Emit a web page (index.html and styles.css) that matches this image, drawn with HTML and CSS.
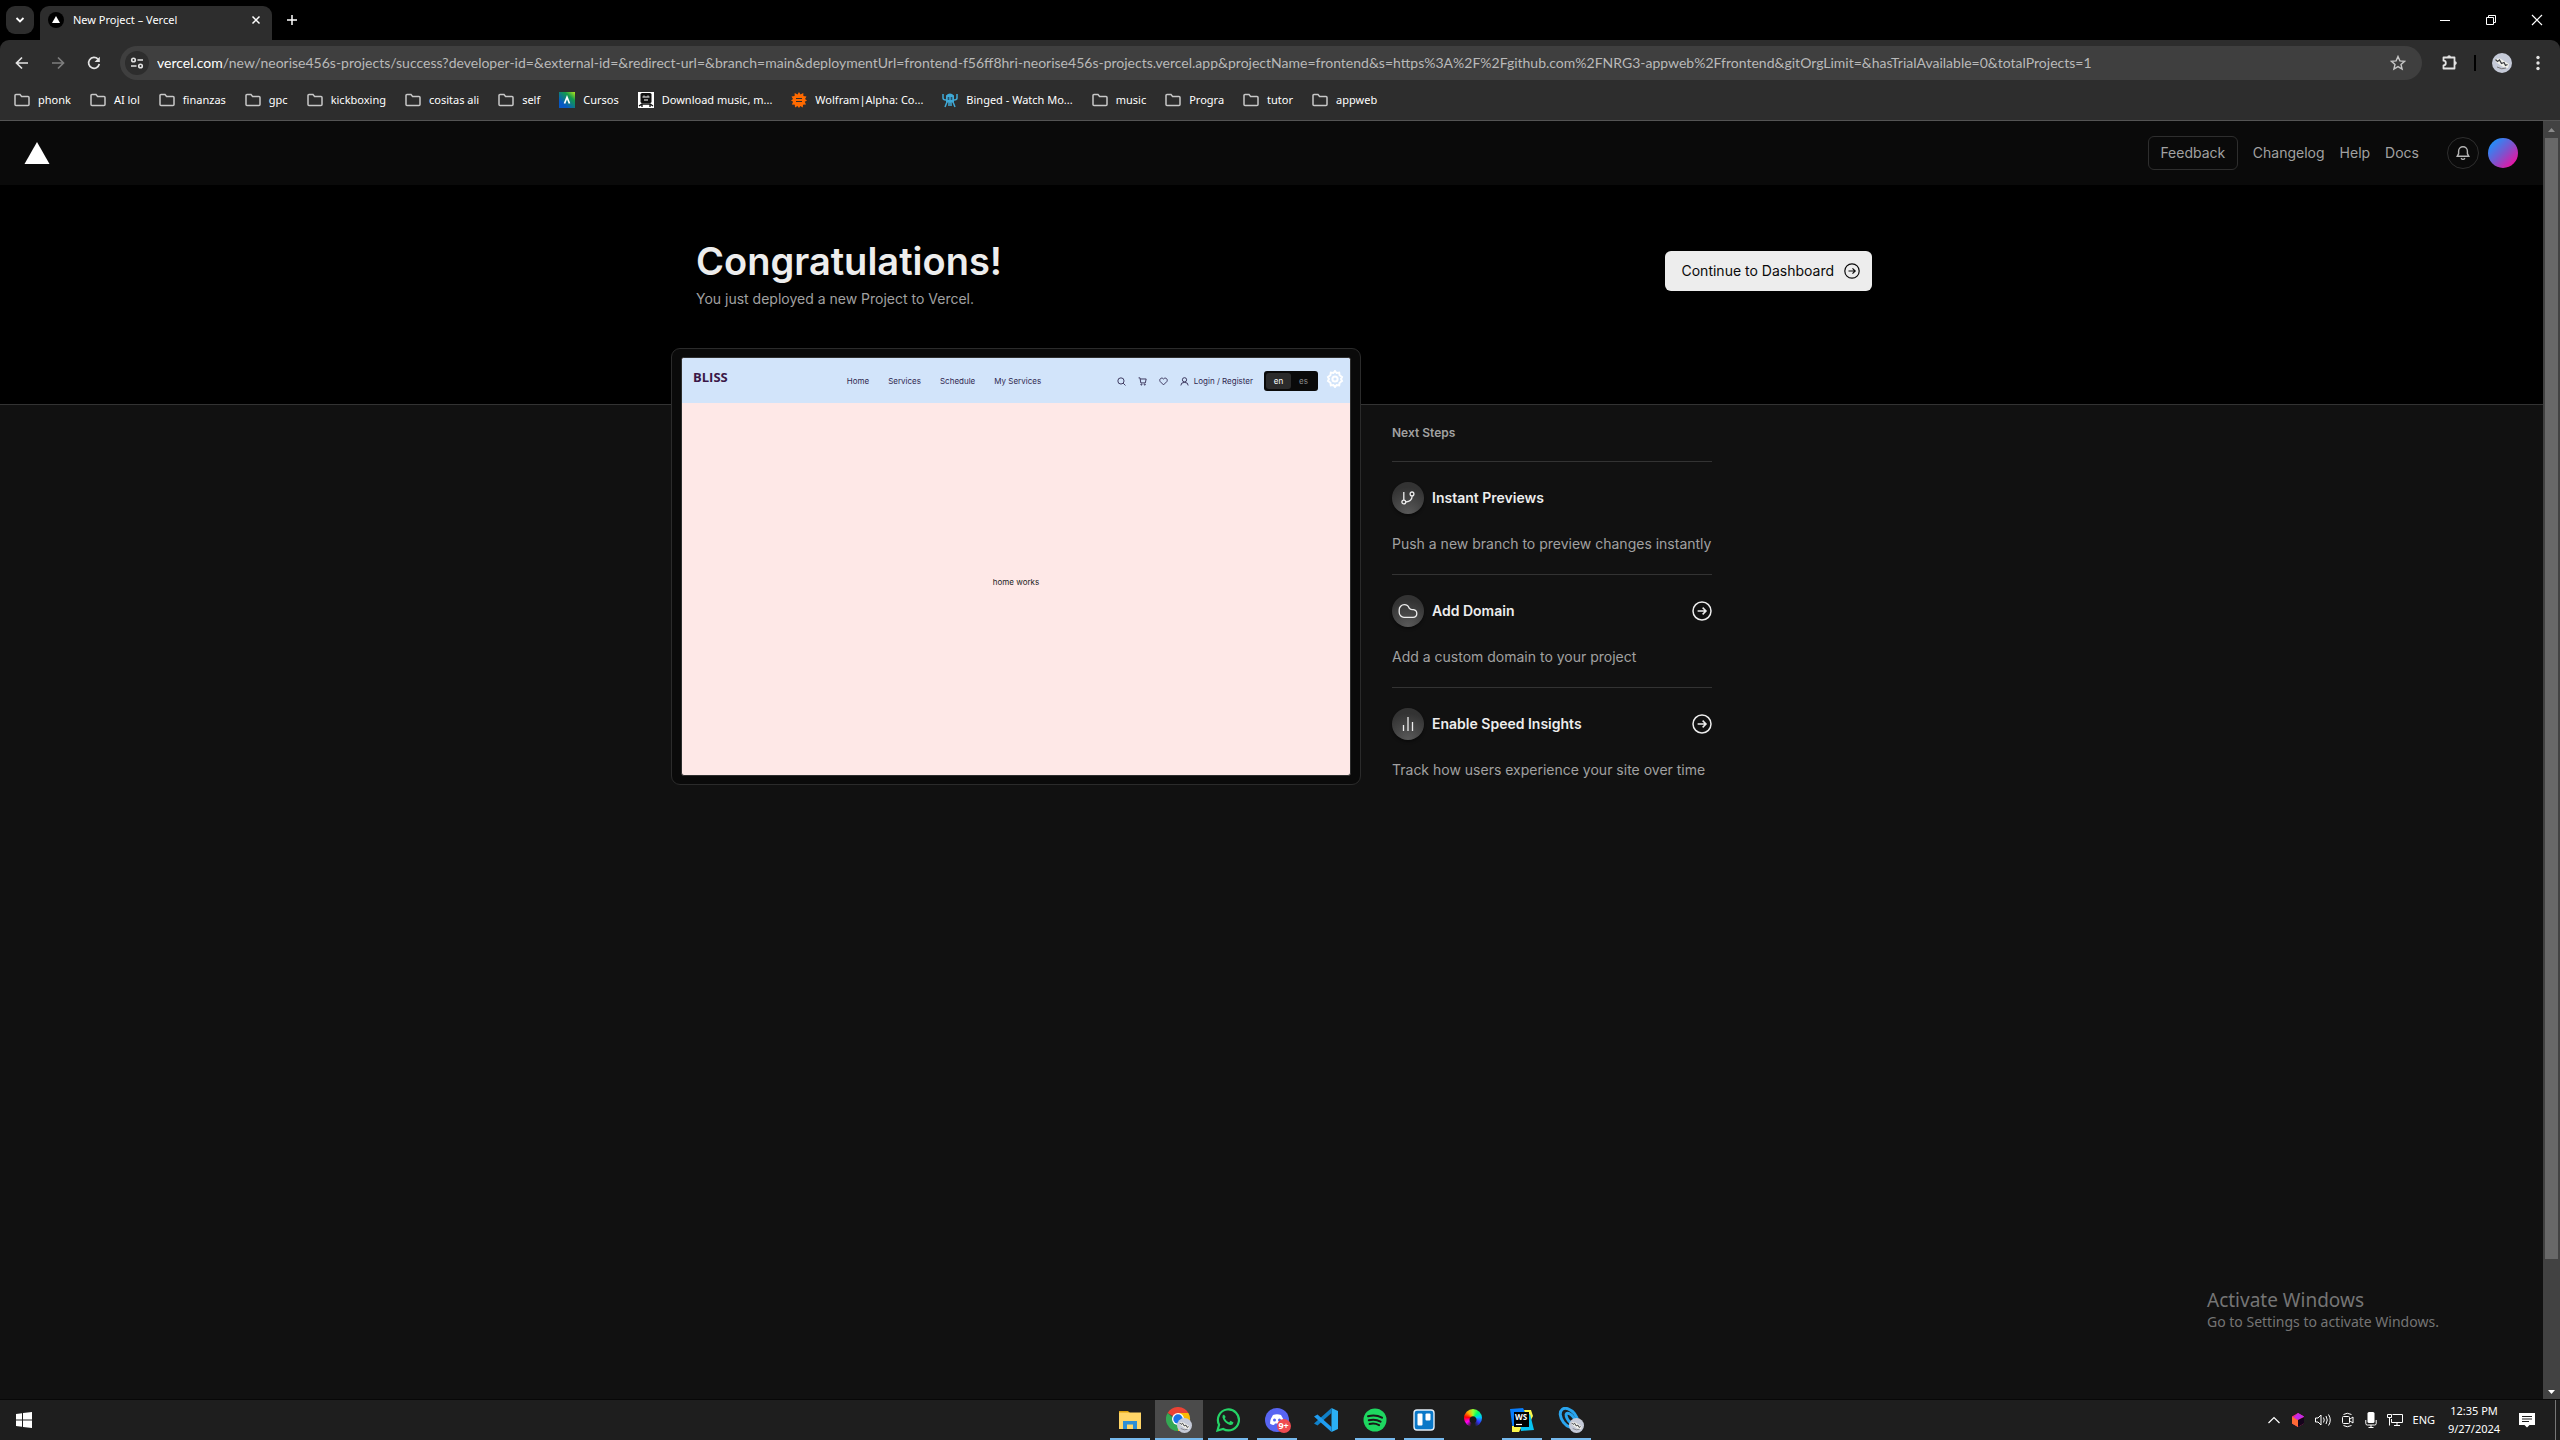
FILE: index.html
```html
<!DOCTYPE html>
<html lang="en">
<head>
<meta charset="utf-8">
<meta name="viewport" content="width=device-width, initial-scale=1">
<title>New Project – Vercel</title>
<link rel="stylesheet" href="styles.css">
</head>
<body>
<svg width="0" height="0" class="defs" aria-hidden="true">
  <defs>
    <symbol id="folder" viewBox="0 0 16 16"><path d="M1 3.500a1 1 0 0 1 1-1h4l1.600 2H14a1 1 0 0 1 1 1V12.500a1 1 0 0 1-1 1H2a1 1 0 0 1-1-1z" fill="none" stroke="#c7c7c7" stroke-width="1.500"/></symbol>
    <symbol id="arrow-circle" viewBox="0 0 16 16"><circle cx="8" cy="8" r="7.200" fill="none" stroke="currentColor" stroke-width="1.200"/><path d="M4.500 8H11M8.500 5.300L11.200 8l-2.700 2.700" fill="none" stroke="currentColor" stroke-width="1.200"/></symbol>
    <symbol id="pilot" viewBox="0 0 20 20"><circle cx="10" cy="10" r="10" fill="#c5cad8"/><path d="M3 6l5-.5 9 5.500-1 4-5-1-7-5z" fill="#f2f2ec"/><path d="M3.500 6.500l2 2 2-1.500 2 3.500 2.500-1 1.500 3 2-1" fill="none" stroke="#3b3d42" stroke-width="1.300"/><path d="M5 14q5 3 9 1" fill="none" stroke="#777" stroke-width="1"/></symbol>
  </defs>
</svg>

<header class="browser">
  <div class="tabstrip">
    <button class="tab-search" aria-label="Search tabs"><svg width="10" height="10" viewBox="0 0 10 10"><path d="M1.500 3l3.500 3.500L8.500 3" fill="none" stroke="#fff" stroke-width="1.800"/></svg></button>
    <div class="tab">
      <svg width="16" height="16" viewBox="0 0 16 16"><circle cx="8" cy="8" r="8" fill="#000"/><path d="M8 4l4 7H4z" fill="#fff"/></svg>
      <span class="tab-title">New Project – Vercel</span>
      <button class="icon-button tab-close" aria-label="Close tab"><svg width="10" height="10" viewBox="0 0 10 10"><path d="M1.500 1.500l7 7m0-7l-7 7" stroke="#fff" stroke-width="1.500"/></svg></button>
    </div>
    <button class="icon-button new-tab" aria-label="New tab"><svg width="12" height="12" viewBox="0 0 12 12"><path d="M6 1v10M1 6h10" stroke="#fff" stroke-width="1.500"/></svg></button>
    <div class="window-controls">
      <button class="icon-button" aria-label="Minimize"><svg width="12" height="12" viewBox="0 0 12 12"><path d="M1 6.500h10" stroke="#fff"/></svg></button>
      <button class="icon-button" aria-label="Restore"><svg width="12" height="12" viewBox="0 0 12 12"><path d="M1.500 3.500h7v7h-7zM3.500 3.500v-2h7v7h-2" fill="none" stroke="#fff"/></svg></button>
      <button class="icon-button" aria-label="Close"><svg width="12" height="12" viewBox="0 0 12 12"><path d="M1 1l10 10M11 1L1 11" stroke="#fff" stroke-width="1.200"/></svg></button>
    </div>
  </div>
  <div class="toolbar">
    <button class="icon-button nav-button" aria-label="Back"><svg width="14" height="14" viewBox="0 0 14 14"><path d="M13 7H2M7 1.500L1.500 7 7 12.500" fill="none" stroke="#e3e3e3" stroke-width="1.700"/></svg></button>
    <button class="icon-button nav-button" aria-label="Forward"><svg width="14" height="14" viewBox="0 0 14 14"><path d="M1 7h11M7 1.500L12.500 7 7 12.500" fill="none" stroke="#7d7d7d" stroke-width="1.700"/></svg></button>
    <button class="icon-button nav-button" aria-label="Reload"><svg width="14" height="14" viewBox="0 0 14 14"><path d="M12.300 8A5.400 5.400 0 1 1 11 3.200" fill="none" stroke="#e3e3e3" stroke-width="1.700"/><path d="M12.800.8V6H7.600z" fill="#e3e3e3"/></svg></button>
    <div class="omnibox">
      <button class="icon-button site-info" aria-label="Site information"><svg width="14" height="14" viewBox="0 0 14 14"><g fill="none" stroke="#e3e3e3" stroke-width="1.600"><circle cx="3.500" cy="4" r="1.800"/><path d="M7.500 4H13M1 10h5.500"/><circle cx="10.500" cy="10" r="1.800"/></g></svg></button>
      <div class="url"><span class="host">vercel.com</span>/new/neorise456s-projects/success?developer-id=&amp;external-id=&amp;redirect-url=&amp;branch=main&amp;deploymentUrl=frontend-f56ff8hri-neorise456s-projects.vercel.app&amp;projectName=frontend&amp;s=https%3A%2F%2Fgithub.com%2FNRG3-appweb%2Ffrontend&amp;gitOrgLimit=&amp;hasTrialAvailable=0&amp;totalProjects=1</div>
      <button class="icon-button star" aria-label="Bookmark this tab"><svg width="16" height="16" viewBox="0 0 16 16"><path d="M8 1.500l1.900 4.400 4.700.4-3.600 3.100 1.100 4.700L8 11.600l-4.100 2.500L5 9.400 1.400 6.300l4.700-.4z" fill="none" stroke="#c7c7c7" stroke-width="1.400"/></svg></button>
    </div>
    <button class="icon-button extensions" aria-label="Extensions"><svg width="18" height="18" viewBox="0 0 18 18"><path d="M2.500 3.500h11v11h-11v-3.200a2.300 2.300 0 0 0 0-4.600z" fill="none" stroke="#e3e3e3" stroke-width="1.800" stroke-linejoin="round"/><path d="M6.300 3a1.800 1.800 0 0 1 3.600 0zM14 7.300a1.800 1.800 0 0 1 0 3.600z" fill="#e3e3e3"/></svg></button>
    <span class="separator"></span>
    <button class="icon-button profile" aria-label="Profile"><svg width="20" height="20"><use href="#pilot"/></svg></button>
    <button class="icon-button more" aria-label="Menu"><svg width="4" height="16" viewBox="0 0 4 16" fill="#e3e3e3"><circle cx="2" cy="2.500" r="1.700"/><circle cx="2" cy="8" r="1.700"/><circle cx="2" cy="13.500" r="1.700"/></svg></button>
  </div>
  <nav class="bookmarks" aria-label="Bookmarks">
    <button class="bookmark"><svg width="16" height="16"><use href="#folder"/></svg>phonk</button>
    <button class="bookmark"><svg width="16" height="16"><use href="#folder"/></svg>AI lol</button>
    <button class="bookmark"><svg width="16" height="16"><use href="#folder"/></svg>finanzas</button>
    <button class="bookmark"><svg width="16" height="16"><use href="#folder"/></svg>gpc</button>
    <button class="bookmark"><svg width="16" height="16"><use href="#folder"/></svg>kickboxing</button>
    <button class="bookmark"><svg width="16" height="16"><use href="#folder"/></svg>cositas ali</button>
    <button class="bookmark"><svg width="16" height="16"><use href="#folder"/></svg>self</button>
    <a class="bookmark" href="#cursos"><svg width="16" height="16" viewBox="0 0 16 16"><defs><linearGradient id="cg" x1="1" y1="0" x2=".3" y2=".8"><stop offset="0" stop-color="#b5e61d"/><stop offset=".4" stop-color="#149a4b"/><stop offset="1" stop-color="#0758c4"/></linearGradient></defs><path d="M0 0h16v16H0z" fill="url(#cg)"/><path d="M5.500 11.500L8 5.200l2.500 6.300" fill="none" stroke="#fff" stroke-width="1.700"/></svg>Cursos</a>
    <a class="bookmark" href="#download"><svg width="16" height="16" viewBox="0 0 16 16"><path d="M0 0h16v16H0z" fill="#fff"/><rect x="2.500" y="1" width="11" height="10" rx="1.500" fill="#111"/><path d="M4.500 5h7M6 3.500v1m4-1v1M6 8h4" stroke="#fff"/><path d="M1 14l3-2h8l3 2M4 12v3m8-3v3" fill="none" stroke="#111" stroke-width="1.300"/></svg>Download music, m...</a>
    <a class="bookmark" href="#wolfram"><svg width="16" height="16" viewBox="0 0 16 16"><path d="M8 0l1.500 2.600L12.300 1l.1 3 3.100.4L14 7l2 1.500-2.300 1.300 1.300 2.700-3 .2-.2 2.800-2.500-1.400L8 16l-1.500-1.900L4 15.500l-.2-2.800-3-.2 1.300-2.700L0 8.500 2 7 .5 4.400 3.600 4l.1-3 2.800 1.600z" fill="#ff6a00"/><path d="M5 6.500h6M5 9.500h6" stroke="#2d2d2d" stroke-width="1.200"/></svg>Wolfram|Alpha: Co...</a>
    <a class="bookmark" href="#binged"><svg width="16" height="16" viewBox="0 0 16 16"><path d="M4 3.500Q8-.5 12 3.500V10q-4 2-8 0z" fill="#3fa9d6"/><path d="M1 2v4q0 2 3 2m11-6v4q0 2-3 2M5 10l-2 5m4-4v3m2-3v3m2-4l2 5" fill="none" stroke="#3fa9d6" stroke-width="1.500"/><path d="M6.500 5v3m3-3v3" stroke="#24506a" stroke-width="1.600"/></svg>Binged - Watch Mo...</a>
    <button class="bookmark"><svg width="16" height="16"><use href="#folder"/></svg>music</button>
    <button class="bookmark"><svg width="16" height="16"><use href="#folder"/></svg>Progra</button>
    <button class="bookmark"><svg width="16" height="16"><use href="#folder"/></svg>tutor</button>
    <button class="bookmark"><svg width="16" height="16"><use href="#folder"/></svg>appweb</button>
  </nav>
</header>

<div class="viewport">
  <div class="page">
    <header class="site-header">
      <a href="#home" aria-label="Vercel home" class="logo"><svg width="26" height="22" viewBox="0 0 26 22"><path d="M13 0l12.500 22H.5z" fill="#fff"/></svg></a>
      <nav class="site-nav">
        <button class="feedback">Feedback</button>
        <a href="#changelog">Changelog</a>
        <a href="#help">Help</a>
        <a href="#docs">Docs</a>
      </nav>
      <button class="bell" aria-label="Notifications"><svg width="16" height="16" viewBox="0 0 16 16" fill="none" stroke="#b5b5b5" stroke-width="1.400"><path d="M3.600 6.200a4.400 4.400 0 0 1 8.800 0v2.500l1.400 2.600H2.200l1.400-2.600zM6 13.300q2 2.200 4 0"/></svg></button>
      <button class="account" aria-label="Account"></button>
    </header>
    <section class="hero">
      <div class="container hero-row">
        <div>
          <h1>Congratulations!</h1>
          <p class="subtitle">You just deployed a new Project to Vercel.</p>
        </div>
        <button class="dashboard">Continue to Dashboard<svg width="16" height="16"><use href="#arrow-circle"/></svg></button>
      </div>
    </section>
    <main class="container content">
      <div class="device">
        <div class="preview">
          <div class="preview-bar">
            <strong class="brand">BLISS</strong>
            <nav class="preview-nav"><a href="#p-home">Home</a><a href="#p-services">Services</a><a href="#p-schedule">Schedule</a><a href="#p-mine">My Services</a></nav>
            <div class="preview-tools">
              <svg width="9" height="9" viewBox="0 0 16 16" class="line"><circle cx="7" cy="7" r="5.500"/><path d="M11 11l4 4"/></svg>
              <svg width="9" height="9" viewBox="0 0 16 16" class="line"><path d="M1 1.500h2.500L5 10.500h8l1.500-7H4"/><circle cx="6" cy="13.500" r="1"/><circle cx="12" cy="13.500" r="1"/></svg>
              <svg width="9" height="9" viewBox="0 0 16 16" class="line"><path d="M8 14L2 8C-.5 4 4.500-.5 8 3.500 11.500-.5 16.500 4 14 8z"/></svg>
              <a href="#login" class="login"><svg width="9" height="9" viewBox="0 0 16 16" class="line"><circle cx="8" cy="5" r="3.800"/><path d="M1.500 15q0-5.500 6.500-5.500t6.500 5.500"/></svg>Login / Register</a>
            </div>
            <div class="lang"><button class="on">en</button><button>es</button></div>
            <svg width="18" height="18" viewBox="0 0 18 18" class="gear"><path d="M9 1l1.600 2 2.600-.4.400 2.600L16 7l-1 2 1 2-2.400 1.800-.4 2.600-2.600-.4L9 17l-1.600-2-2.600.4-.4-2.600L2 11l1-2-1-2 2.400-1.800.4-2.600 2.600.4z"/><circle cx="9" cy="9" r="2.600"/></svg>
          </div>
          <div class="preview-body">home works</div>
        </div>
      </div>
      <aside class="steps">
        <h2>Next Steps</h2>
        <section class="step">
          <div class="step-head"><span class="disc"><svg width="14" height="14" viewBox="0 0 14 14" class="stroke"><path d="M2.800 1v8M11.200 4.800q-.2 5.700-6.400 6.200"/><circle cx="2.800" cy="11" r="1.900"/><circle cx="11" cy="2.900" r="1.900"/></svg></span><h3>Instant Previews</h3></div>
          <p>Push a new branch to preview changes instantly</p>
        </section>
        <section class="step">
          <div class="step-head"><span class="disc"><svg width="20" height="16" viewBox="0 0 20 16" class="stroke"><path d="M6 14.300C3.200 14.300 1.200 12 1.200 9.300V6.800C1.200 4 3.400 1.700 6.300 1.700c2.400 0 4.200 1.400 4.900 3.500 1.300 2 2.600 1.200 4.300 1.400 2 .4 3.300 2 3.300 3.900 0 2.200-1.700 3.800-3.800 3.800z"/></svg></span><h3>Add Domain</h3><a href="#domain" aria-label="Add domain"><svg width="20" height="20"><use href="#arrow-circle"/></svg></a></div>
          <p>Add a custom domain to your project</p>
        </section>
        <section class="step">
          <div class="step-head"><span class="disc"><svg width="14" height="16" viewBox="0 0 14 16" class="stroke"><path d="M2.500 9v6M7 1v14M11.500 6v9"/></svg></span><h3>Enable Speed Insights</h3><a href="#insights" aria-label="Enable Speed Insights"><svg width="20" height="20"><use href="#arrow-circle"/></svg></a></div>
          <p>Track how users experience your site over time</p>
        </section>
      </aside>
    </main>
  </div>
  <div class="scrollbar" aria-hidden="true">
    <svg width="17" height="17" viewBox="0 0 17 17"><path d="M5 11l3.500-4 3.500 4z" fill="#8b8b8b"/></svg>
    <div class="thumb-track"><div class="thumb"></div></div>
    <svg width="17" height="17" viewBox="0 0 17 17"><path d="M5 7l3.500 4L12 7z" fill="#fff"/></svg>
  </div>
  <div class="watermark"><p class="wm-title">Activate Windows</p><p>Go to Settings to activate Windows.</p></div>
</div>

<footer class="taskbar">
  <button class="icon-button start" aria-label="Start"><svg width="16" height="16" viewBox="0 0 16 16" fill="#fff"><path d="M0 2l6-.8v6.300H0zM7 1.100L16 0v7.500H7zM0 8.500h6v6.300L0 14zM7 8.500h9V16l-9-1.100z"/></svg></button>
  <div class="apps">
    <button class="app running" aria-label="File Explorer"><svg width="24" height="24" viewBox="0 0 24 24"><path d="M1 3h9l2 2h-11z" fill="#e0a30f"/><path d="M1 4.500h22V21H1z" fill="#ffd567"/><path d="M5 21v-8h14v8h-4v-4.500H9V21z" fill="#2f8fd6"/></svg></button>
    <button class="app running active" aria-label="Chrome"><svg width="26" height="26" viewBox="0 0 26 26"><path d="M12 12L1.600 6A12 12 0 0 1 22.400 6z" fill="#ea4335"/><path d="M12 12V6h10.400A12 12 0 0 1 12 24z" fill="#fbbc05"/><path d="M12 24A12 12 0 0 1 1.600 6L12 15z" fill="#34a853"/><circle cx="12" cy="12" r="6" fill="#fff"/><circle cx="12" cy="12" r="4.700" fill="#1a73e8"/><use href="#pilot" x="11" y="11" width="15" height="15"/></svg></button>
    <button class="app running" aria-label="WhatsApp"><svg width="24" height="24" viewBox="0 0 24 24"><path d="M1.500 22.500l1.600-5.800A10.500 10.500 0 1 1 7.200 21z" fill="none" stroke="#25d366" stroke-width="2.200"/><path d="M8 6.500q-2 .7-1.500 3 1.500 5.500 7.500 7.500 3 .3 3.500-2.500l-3-1.700-1.400 1.600q-3-1.200-4.400-4.200l1-1.200z" fill="#25d366"/></svg></button>
    <button class="app running" aria-label="Discord, more than 9 notifications"><svg width="24" height="24" viewBox="0 0 24 24"><circle cx="12" cy="12" r="12" fill="#5865f2"/><path d="M8 7q4-1.500 8 0 3 4 3 8.500-2 1.500-4 1.500l-1-1.500h-4L9 17q-2 0-4-1.500Q5 11 8 7z" fill="#fff"/><circle cx="9.500" cy="12" r="1.500" fill="#5865f2"/><circle cx="14.500" cy="12" r="1.500" fill="#5865f2"/></svg><span class="badge">9+</span></button>
    <button class="app" aria-label="Visual Studio Code"><svg width="24" height="24" viewBox="0 0 24 24"><path d="M17.500 0L24 3v18l-6.500 3z" fill="#2bb0f5"/><path d="M17.500 5L3.500 17.500 0 15.500 17.500 0z" fill="#1080c8"/><path d="M17.500 19L3.500 6.500 0 8.500 17.500 24z" fill="#1f9cf0"/></svg></button>
    <button class="app running" aria-label="Spotify"><svg width="24" height="24" viewBox="0 0 24 24"><circle cx="12" cy="12" r="11.500" fill="#1ed760"/><path d="M5 8.300q7.500-2.200 14 1.400M5.800 12.300q6.200-1.800 11.800 1.300M6.500 16q5-1.400 9.600 1.100" fill="none" stroke="#191919" stroke-width="2" stroke-linecap="round"/></svg></button>
    <button class="app running" aria-label="Trello"><svg width="22" height="22" viewBox="0 0 22 22"><rect x="1" y="1" width="20" height="20" rx="3" fill="#0a78c8" stroke="#e4eef7" stroke-width="1.400"/><rect x="4.500" y="4.500" width="5" height="12" rx="1" fill="#fff"/><rect x="12.500" y="4.500" width="5" height="7" rx="1" fill="#fff"/></svg></button>
    <button class="app" aria-label="Color picker"><span class="wheel"></span></button>
    <button class="app running" aria-label="WebStorm"><svg width="24" height="24" viewBox="0 0 24 24"><path d="M0 1l13-1 2 4-6 14-6 5z" fill="#087cfa"/><path d="M14 2h7l2 6-4 8z" fill="#fcf84a"/><path d="M2 18h10l-3 6H2z" fill="#fcf84a"/><path d="M10 12l10-6 4 16-13 1z" fill="#07c3f2"/><path d="M4 4h15v15H4z" fill="#000"/><text x="5" y="12" class="ws">WS</text><path d="M6 16.500h6" stroke="#fff" stroke-width="1.200"/></svg></button>
    <button class="app running" aria-label="Web app"><svg width="26" height="26" viewBox="0 0 26 26"><g fill="none" stroke="#2aa5ee" stroke-width="3"><ellipse cx="11" cy="11" rx="7" ry="11" transform="rotate(-38 11 11)"/><ellipse cx="13" cy="12" rx="3" ry="7" transform="rotate(-38 13 12)"/></g><use href="#pilot" x="11" y="11" width="15" height="15"/></svg></button>
  </div>
  <div class="tray">
    <svg width="14" height="14" viewBox="0 0 14 14"><path d="M1.500 10L7 4.500l5.500 5.500" fill="none" stroke="#fff" stroke-width="1.200"/></svg>
    <svg width="14" height="14" viewBox="0 0 14 14"><path d="M7 0l6 3.500v7L7 14l-6-3.500v-7z" fill="#f0248c"/><path d="M1 3.500L7 7v7l-6-3.500z" fill="#ff6a35"/><path d="M7 0l6 3.500L7 7 3 4.500z" fill="#c22be8"/><path d="M7 7l6-3v6.500L7 14z" fill="#15051c"/></svg>
    <svg width="16" height="14" viewBox="0 0 16 14" fill="none" stroke="#fff"><path d="M.5 5h2.500l3-3v10l-3-3H.5z"/><path d="M8.500 4.500q1.500 2.500 0 5M11 3q2.500 4 0 8M13.500 1.500q3.500 5.500 0 11"/></svg>
    <svg width="14" height="16" viewBox="0 0 14 16" fill="none" stroke="#fff"><rect x="1.500" y="4.500" width="7" height="7" rx="1"/><path d="M9 7l3-2v6L9 9M2.500 2.500q3.500-2.500 8 0M2.500 13.500q3.500 2.500 8 0"/></svg>
    <svg width="12" height="16" viewBox="0 0 12 16"><rect x="2.500" y="0" width="7" height="11" rx="1.500" fill="#fff"/><path d="M.8 8v3.500q0 1.500 1.500 1.500h7.400q1.500 0 1.500-1.500V8M6 13v2.500M3.500 15.500h5" fill="none" stroke="#fff"/></svg>
    <svg width="16" height="14" viewBox="0 0 16 14" fill="none" stroke="#fff"><path d="M5.500 1.500h10v8h-11V6M.5 1.500h4v3h-4zM2.500 4.500v8M10 9.500v3M7 12.500h6"/></svg>
    <span class="language">ENG</span>
    <div class="clock"><time>12:35 PM</time><time>9/27/2024</time></div>
    <svg class="notices" width="16" height="16" viewBox="0 0 16 16"><path d="M0 1h16v12h-5.500L8 15.500 5.500 13H0z" fill="#fff"/><path d="M3 4.500h10M3 7h10M3 9.500h7" stroke="#1e1e1e"/></svg>
    <span class="show-desktop"></span>
  </div>
</footer>
</body>
</html>
```
FILE: styles.css
```css
* { box-sizing: border-box; }
body {
  margin: 0;
  min-height: 100vh;
  display: flex;
  flex-direction: column;
  background: #000;
  color: #ededed;
  font-family: Inter, "Liberation Sans", sans-serif;
  font-size: 14px;
  line-height: 20px;
}
h1, h2, h3, p { margin: 0; }
button { border: 0; padding: 0; margin: 0; background: none; color: inherit; font: inherit; }
a { color: inherit; text-decoration: none; }
svg { display: block; flex: none; }
.defs { position: absolute; }
.icon-button { display: flex; align-items: center; justify-content: center; flex: none; }

/* Browser frame */
.browser { font-family: "Noto Sans", "Open Sans", sans-serif; color: #fff; border-bottom: 1px solid #545454; }
.tabstrip { display: flex; align-items: flex-end; height: 40px; padding-left: 6px; }
.tab-search { display: flex; align-items: center; justify-content: center; width: 28px; height: 28px; margin-bottom: 6px; border-radius: 9px; background: #2d2d2d; }
.tab { display: flex; align-items: center; width: 232px; height: 34px; margin-left: 6px; padding: 0 8px 6px; border-radius: 9px 9px 0 0; background: #2d2d2d; }
.tab-title { flex: 1; margin-left: 9px; font-size: 11px; line-height: 16px; }
.tab-close { width: 16px; height: 28px; }
.new-tab { width: 28px; height: 40px; margin-left: 6px; }
.window-controls { display: flex; margin-left: auto; }
.window-controls .icon-button { width: 46px; height: 40px; }
.toolbar { display: flex; align-items: center; height: 46px; padding: 0 6px; border-radius: 9px 9px 0 0; background: #2d2d2d; }
.nav-button { width: 32px; height: 32px; margin-right: 4px; }
.omnibox { display: flex; align-items: center; flex: 1; min-width: 0; height: 34px; margin-left: 6px; padding: 0 12px 0 5px; border-radius: 17px; background: #3f3f3f; }
.site-info { width: 24px; height: 24px; border-radius: 12px; background: #2d2d2d; }
.url { flex: 1; min-width: 0; overflow: hidden; margin-left: 8px; color: #b9b9b9; font-family: Lato, sans-serif; font-size: 14px; line-height: 20px; white-space: nowrap; }
.host { color: #fff; }
.star { width: 24px; height: 24px; }
.extensions { width: 32px; margin-left: 12px; }
.separator { width: 2px; height: 16px; margin-left: 8px; background: #000; }
.profile { width: 32px; margin-left: 10px; }
.more { width: 32px; margin-left: 4px; }
.bookmarks { display: flex; align-items: center; gap: 19px; height: 34px; padding: 0 14px 6px; background: #2d2d2d; font-size: 11px; line-height: 16px; }
.bookmark { display: flex; align-items: center; gap: 8px; white-space: nowrap; }

/* Web page */
.viewport { position: relative; display: flex; flex: 1; }
.page { flex: 1; min-width: 0; background: #111; }
.site-header { display: flex; align-items: center; height: 64px; padding: 0 25px 0 24px; background: #0a0a0a; color: #a1a1a1; }
.site-nav { display: flex; align-items: center; gap: 15px; margin-left: auto; }
.feedback { width: 90px; height: 34px; border: 1px solid #2e2e2e; border-radius: 6px; }
.bell { display: flex; align-items: center; justify-content: center; width: 32px; height: 32px; margin-left: 28px; border: 1px solid #2e2e2e; border-radius: 50%; }
.account { width: 30px; height: 30px; margin-left: 9px; border-radius: 50%; background: linear-gradient(135deg, #1a94ff 10%, #7a55cf 50%, #f80a9b 92%); }
.container { max-width: 1201px; margin: 0 auto; }
.hero { padding: 52px 0 95px; border-bottom: 1px solid #333; background: #000; }
.hero-row { display: flex; align-items: center; justify-content: space-between; padding-left: 25px; }
h1 { font-size: 38px; font-weight: 600; line-height: 48px; }
.subtitle { margin-top: 4px; color: #a1a1a1; }
.dashboard { display: flex; align-items: center; gap: 10px; height: 40px; margin-bottom: 4px; padding: 0 12px 0 17px; border-radius: 6px; background: #ededed; color: #0a0a0a; }
.content { display: flex; align-items: flex-start; gap: 31px; }
.device { width: 690px; margin-top: -57px; padding: 8px 9px; border: 1px solid #2b2b2b; border-radius: 9px; background: #0a0a0a; }
.preview { display: flex; flex-direction: column; aspect-ratio: 16 / 10; border: 1px solid #2e2e2e; border-radius: 3px; overflow: hidden; background: #fee8e7; color: #222; font-size: 8px; line-height: 12px; }
.preview-bar { display: flex; align-items: center; height: 45px; padding: 1px 6px 0 11px; background: #d2e4fa; color: #302850; }
.brand { padding-bottom: 8px; color: #3b1747; font-family: "Open Sans", sans-serif; font-size: 13px; line-height: 16px; }
.preview-nav { display: flex; gap: 19px; margin-left: 119px; }
.preview-tools { display: flex; align-items: center; gap: 12px; margin-left: auto; }
.login { display: flex; align-items: center; gap: 5px; }
.line { fill: none; stroke: #302850; stroke-width: 1.600; }
.lang { display: flex; align-items: center; width: 54px; height: 20px; margin-left: 11px; padding: 0 2px; border-radius: 3px; background: #0a0a0a; color: #8c8c8c; }
.lang button { flex: 1; height: 16px; border-radius: 3px; }
.lang .on { background: #2b2b2b; color: #fff; }
.gear { margin: 0 0 4px 8px; fill: none; stroke: #fff; stroke-width: 2; }
.preview-body { display: flex; align-items: center; justify-content: center; flex: 1; padding-bottom: 14px; }
.steps { width: 320px; padding-top: 20px; }
h2 { padding-bottom: 20px; color: #a1a1a1; font-size: 12px; font-weight: 600; line-height: 16px; }
h3 { font-size: 14px; font-weight: 600; line-height: 20px; }
.step { padding: 20px 0; border-top: 1px solid #333; }
.step-head { display: flex; align-items: center; gap: 8px; height: 32px; margin-bottom: 20px; }
.step-head a { margin-left: auto; }
.disc { display: flex; align-items: center; justify-content: center; width: 32px; height: 32px; border-radius: 50%; background: radial-gradient(circle at 50% 100%, #5a5a5a, #333 75%); box-shadow: 0 2px 3px #0006; }
.stroke { fill: none; stroke: #ededed; stroke-width: 1.300; }
.step p { color: #a1a1a1; white-space: nowrap; }
.scrollbar { display: flex; flex-direction: column; width: 17px; background: #424242; }
.thumb-track { flex: 1; padding: 0 2px; }
.thumb { height: 90%; background: #686868; }
.watermark { position: absolute; right: 117px; bottom: 68px; width: 236px; color: #757575; font-family: "Noto Sans", sans-serif; white-space: nowrap; }
.wm-title { font-size: 19px; line-height: 24px; }

/* Taskbar */
.taskbar { display: grid; grid-template-columns: 1105fr auto 965fr; height: 40px; background: #1e1e1e; box-shadow: 0 -1px #080808; position: relative; font-family: "Noto Sans", sans-serif; font-size: 11px; color: #fff; }
.start { width: 48px; height: 40px; }
.apps { display: flex; gap: 1px; }
.app { position: relative; display: flex; align-items: center; justify-content: center; width: 48px; height: 40px; }
.app::after { content: ""; position: absolute; left: 4px; right: 4px; bottom: 0; height: 2px; }
.running::after { background: #76b9ed; }
.active { background: #4b4b4b; }
.active::after { left: 0; right: 0; }
.badge { position: absolute; right: 10px; bottom: 7px; width: 14px; height: 14px; border-radius: 7px; background: #ef4a50; font-size: 9px; font-weight: 700; line-height: 14px; text-align: center; }
.wheel { width: 18px; height: 18px; margin-bottom: 4px; border-radius: 50%; background: radial-gradient(circle at 50% 60%, #191919 3px, transparent 4px), conic-gradient(from 0deg, #9f3, #0f6, #0cf, #33f, #1e1e1e 46%, #1e1e1e 54%, #f0f, #f00, #fa0, #9f3); }
.ws { fill: #fff; font-size: 8px; font-weight: 700; }
.tray { display: flex; align-items: center; justify-content: flex-end; gap: 10px; }
.language { font-size: 11px; }
.clock { display: flex; flex-direction: column; width: 58px; line-height: 18px; text-align: center; }
.notices { margin: 0 10px 0 6px; }
.show-desktop { height: 40px; width: 5px; border-left: 1px solid #777; }
```
